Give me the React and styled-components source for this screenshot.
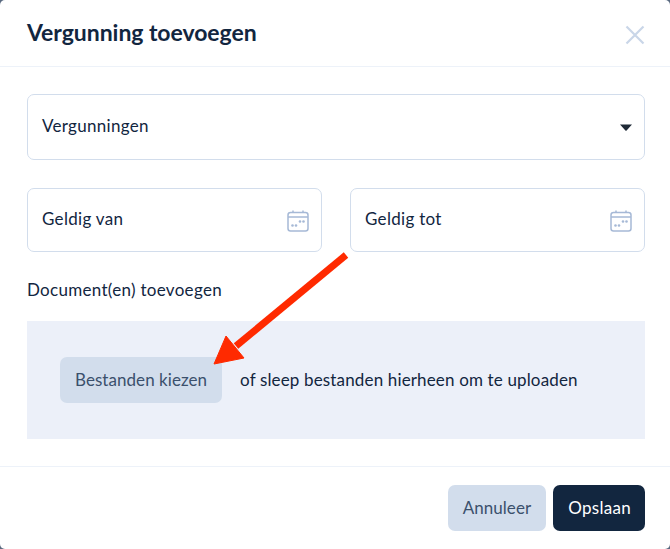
import React from 'react'
import styled, { createGlobalStyle } from 'styled-components'

const Global = createGlobalStyle`
  html, body {
    margin: 0;
    padding: 0;
    background: #5a6a80;
  }
  * {
    box-sizing: border-box;
  }
`

const Modal = styled.div`
  position: relative;
  width: 670px;
  height: 549px;
  background: #fff;
  border-radius: 5px;
  overflow: hidden;
  color: #12263f;
  font-family: "Lato", "Noto Sans", sans-serif;
  display: flex;
  flex-direction: column;
`

const Header = styled.header`
  height: 67px;
  padding: 0 25px 0 27px;
  border-bottom: 1px solid #edf2f9;
  display: flex;
  align-items: center;
  justify-content: space-between;
`

const Title = styled.h2`
  margin: 0 0 2px;
  font-size: 23px;
  font-weight: 700;
  letter-spacing: -0.05px;
  color: #12263f;
`

const CloseButton = styled.button`
  width: 20px;
  height: 20px;
  padding: 0;
  margin-top: 3px;
  border: none;
  background: none;
  color: #c9d6e8;
  display: flex;
`

const Body = styled.div`
  height: 400px;
  padding: 27px 25px 0 27px;
  border-bottom: 1px solid #edf2f9;
  display: flex;
  flex-direction: column;
`

const Field = styled.div`
  height: ${p => p.$height}px;
  padding: 0 12px 3px 14px;
  border: 1.5px solid #d2ddec;
  border-radius: 7px;
  background: #fff;
  font-size: 17px;
  letter-spacing: 0.3px;
  display: flex;
  align-items: center;
  justify-content: space-between;
`

const DateRow = styled.div`
  margin-top: 28px;
  display: grid;
  grid-template-columns: 295px 295px;
  gap: 28px;
`

const FieldLabel = styled.label`
  margin-top: 28px;
  font-size: 17px;
  line-height: 20px;
  letter-spacing: 0.3px;
`

const DropZone = styled.div`
  margin-top: 21px;
  height: 118px;
  padding: 0 32px 0 33px;
  background: #ecf0f9;
  display: flex;
  align-items: center;
  gap: 18px;
  font-size: 17px;
  letter-spacing: 0.15px;
`

const DropText = styled.span`
  margin-bottom: 2px;
`

const Button = styled.button`
  height: 46px;
  padding: ${p => (p.$primary ? '0 14px 2px 15px' : '0 15px 2px')};
  border: none;
  border-radius: 7px;
  font-family: inherit;
  font-size: 17px;
  letter-spacing: ${p => (p.$primary ? '0.3px' : '0.05px')};
  background: ${p => (p.$primary ? '#12263f' : '#d2ddec')};
  color: ${p => (p.$primary ? '#fff' : '#3b506c')};
`

const Footer = styled.footer`
  flex: 1;
  padding: 0 25px 0 0;
  display: flex;
  align-items: center;
  justify-content: flex-end;
  gap: 7px;
`

const ArrowOverlay = styled.svg`
  position: absolute;
  left: 0;
  top: 0;
  pointer-events: none;
`

const CalendarSvg = styled.svg`
  margin-top: 5px;
`

const CaretSvg = styled.svg`
  margin-top: 4px;
`

const CalendarIcon = () => (
  <CalendarSvg width="22" height="22" viewBox="0 0 22 22" fill="none" stroke="#a6b9d6" strokeWidth="1.5">
    <rect x="1" y="2.5" width="20" height="18.5" rx="2.5" />
    <path d="M1 7h20M6 .5v2.5M16 .5v2.5" />
    <g fill="#a6b9d6" stroke="none">
      <circle cx="5.5" cy="15.5" r="1.3" />
      <circle cx="9" cy="15.5" r="1.3" />
      <circle cx="13" cy="11.5" r="1.3" />
      <circle cx="16.5" cy="11.5" r="1.3" />
    </g>
  </CalendarSvg>
)

const Caret = () => (
  <CaretSvg width="12" height="7" viewBox="0 0 12 7" fill="#1f2a37">
    <path d="M0 0.5h12L6.6 6.4a.8.8 0 0 1-1.2 0z" />
  </CaretSvg>
)

export default function App() {
  return (
    <>
      <Global />
      <Modal>
        <Header>
          <Title>Vergunning toevoegen</Title>
          <CloseButton aria-label="Sluiten">
            <svg width="20" height="20" viewBox="0 0 20 20" stroke="currentColor" strokeWidth="2.2" fill="none">
              <path d="M1.5 1.5l17 17M18.5 1.5l-17 17" />
            </svg>
          </CloseButton>
        </Header>
        <Body>
          <Field $height={66}>
            Vergunningen
            <Caret />
          </Field>
          <DateRow>
            <Field $height={64}>
              Geldig van
              <CalendarIcon />
            </Field>
            <Field $height={64}>
              Geldig tot
              <CalendarIcon />
            </Field>
          </DateRow>
          <FieldLabel>Document(en) toevoegen</FieldLabel>
          <DropZone>
            <Button>Bestanden kiezen</Button>
            <DropText>of sleep bestanden hierheen om te uploaden</DropText>
          </DropZone>
        </Body>
        <Footer>
          <Button>Annuleer</Button>
          <Button $primary>Opslaan</Button>
        </Footer>
        <ArrowOverlay width="670" height="549" viewBox="0 0 670 549">
          <path d="M346 255L236 346" stroke="#ff2a00" strokeWidth="7" fill="none" />
          <path d="M214 364L226 336 244 358z" fill="#ff2a00" stroke="#ff2a00" strokeWidth="1" />
        </ArrowOverlay>
      </Modal>
    </>
  )
}
